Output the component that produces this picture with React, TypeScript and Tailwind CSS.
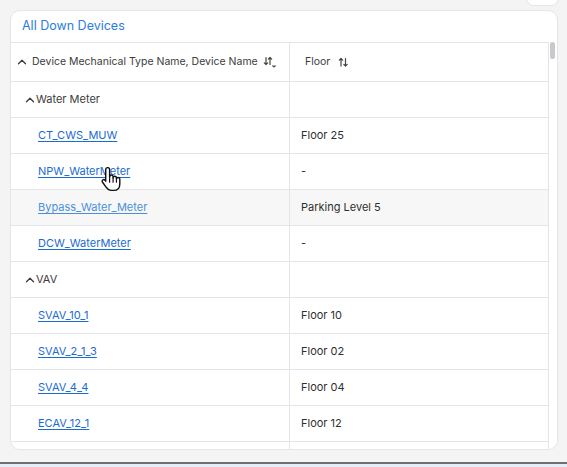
import React from "react";

type Row =
  | { kind: "group"; name: string }
  | { kind: "item"; name: string; floor: string; hl?: boolean; light?: boolean };

const rows: Row[] = [
  { kind: "group", name: "Water Meter" },
  { kind: "item", name: "CT_CWS_MUW", floor: "Floor 25" },
  { kind: "item", name: "NPW_WaterMeter", floor: "-" },
  { kind: "item", name: "Bypass_Water_Meter", floor: "Parking Level 5", hl: true, light: true },
  { kind: "item", name: "DCW_WaterMeter", floor: "-" },
  { kind: "group", name: "VAV" },
  { kind: "item", name: "SVAV_10_1", floor: "Floor 10" },
  { kind: "item", name: "SVAV_2_1_3", floor: "Floor 02" },
  { kind: "item", name: "SVAV_4_4", floor: "Floor 04" },
  { kind: "item", name: "ECAV_12_1", floor: "Floor 12" },
  { kind: "item", name: "", floor: "" },
];

const Chevron = () => (
  <svg width="10" height="10" viewBox="0 0 10 10" fill="none" stroke="#3a3a3a" strokeWidth="1.3" strokeLinecap="round" strokeLinejoin="round">
    <path d="M1.5 6.8 L5 3.3 L8.5 6.8" />
  </svg>
);

const SortDownUp = () => (
  <svg width="14" height="12" viewBox="0 0 14 12" fill="none" stroke="#444" strokeWidth="1.2" strokeLinecap="round" strokeLinejoin="round">
    <path d="M3 1.5 V8.5 M1.3 6.8 L3 8.5 L4.7 6.8" />
    <path d="M7 8.5 V1.5 M5.3 3.2 L7 1.5 L8.7 3.2" />
    <path d="M9.5 10 L11 11.3 L12.5 10 Z" fill="#444" strokeWidth="0.6" />
  </svg>
);

const SortUpDown = () => (
  <svg width="11" height="11" viewBox="0 0 11 11" fill="none" stroke="#444" strokeWidth="1.2" strokeLinecap="round" strokeLinejoin="round">
    <path d="M3 9 V1.5 M1.3 3.2 L3 1.5 L4.7 3.2" />
    <path d="M7.5 1.5 V9 M5.8 7.3 L7.5 9 L9.2 7.3" />
  </svg>
);

const HandCursor = () => (
  <svg width="24" height="26" viewBox="0 0 22 24" className="absolute left-[100px] top-[166px]">
    <path
      d="M7 1.5 C8.2 1.5 8.8 2.3 8.8 3.5 V10 C9 8.8 9.6 8.3 10.5 8.3 C11.5 8.3 12 9 12 10 V10.8 C12.2 9.8 12.8 9.4 13.6 9.4 C14.6 9.4 15.1 10.1 15.1 11 V11.8 C15.3 11 15.9 10.6 16.6 10.6 C17.6 10.6 18.2 11.3 18.2 12.3 V16.5 C18.2 20 16.2 22.5 12.5 22.5 H10.5 C8 22.5 6.8 21.3 5.5 19.5 L2.3 15 C1.7 14.1 1.9 13.2 2.6 12.8 C3.4 12.3 4.2 12.6 4.8 13.4 L5.2 14 V3.5 C5.2 2.3 5.8 1.5 7 1.5 Z"
      fill="#ffffff"
      stroke="#111"
      strokeWidth="1.3"
      strokeLinejoin="round"
    />
    <path d="M8.8 10 V15 M12 10.8 V15 M15.1 11.8 V15" stroke="#111" strokeWidth="1.1" strokeLinecap="round" />
  </svg>
);

export default function App() {
  return (
    <div
      className="relative w-[567px] h-[467px] overflow-hidden bg-[#f4f4f5] flex flex-col"
      style={{ fontFamily: "Inter, 'Noto Sans', sans-serif" }}
    >
      <div className="absolute right-[8px] top-[-10px] w-[33px] h-[16px] rounded-b-[8px] bg-white border border-[#e6e6ea]" />
      <div className="pt-[10px] pl-[10px] pr-[9px] shrink-0">
        <div className="h-[440px] rounded-[10px] border border-[#e4e4ea] bg-white overflow-hidden flex flex-col">
          <div className="h-[31px] shrink-0 flex items-center pl-[11px] text-[12.5px] text-[#2b7de0]">All Down Devices</div>
          <div className="flex flex-1 min-h-0 overflow-hidden">
            <div className="flex-1 flex flex-col border-r border-[#e4e4ea] overflow-hidden">
              <div className="flex h-[40px] shrink-0 border-t border-b border-[#e4e4ea] text-[10.5px] text-[#3c3c3c]">
                <div className="w-[279px] flex items-center pl-[6px] gap-[5px] border-r border-[#e4e4ea]">
                  <Chevron />
                  <span>Device Mechanical Type Name, Device Name</span>
                  <SortDownUp />
                </div>
                <div className="flex-1 flex items-center pl-[15px] gap-[8px]">
                  <span>Floor</span>
                  <SortUpDown />
                </div>
              </div>
              {rows.map((r, i) => (
                <div
                  key={i}
                  className={`flex h-[36px] shrink-0 border-b border-[#e4e4ea] text-[11px] ${
                    r.kind === "item" && r.hl ? "bg-[#f7f7f7]" : "bg-white"
                  }`}
                >
                  <div className="w-[279px] flex items-center border-r border-[#e4e4ea]">
                    {r.kind === "group" ? (
                      <div className="flex items-center gap-[1px] pl-[14px] text-[#3c3c3c]">
                        <Chevron />
                        <span>{r.name}</span>
                      </div>
                    ) : (
                      <span
                        className={`pl-[27px] underline underline-offset-[2px] ${
                          r.light ? "text-[#4b8fdc] decoration-[#4b8fdc]" : "text-[#1a6bd3] decoration-[#1a6bd3]"
                        }`}
                      >
                        {r.name}
                      </span>
                    )}
                  </div>
                  <div className="flex-1 flex items-center pl-[11px] text-[#2f2f2f]">
                    {r.kind === "item" ? r.floor : ""}
                  </div>
                </div>
              ))}
            </div>
            <div className="w-[8px] shrink-0 relative bg-white">
              <div className="absolute left-[1px] top-0 w-[5px] h-[17px] rounded-full bg-[#c9c9cc]" />
            </div>
          </div>
        </div>
      </div>
      <div className="flex-1" />
      <div className="h-[2px] shrink-0 bg-[#6f6f72]" />
      <div className="h-[3px] shrink-0 bg-[#e6edf7]" />
      <HandCursor />
    </div>
  );
}
